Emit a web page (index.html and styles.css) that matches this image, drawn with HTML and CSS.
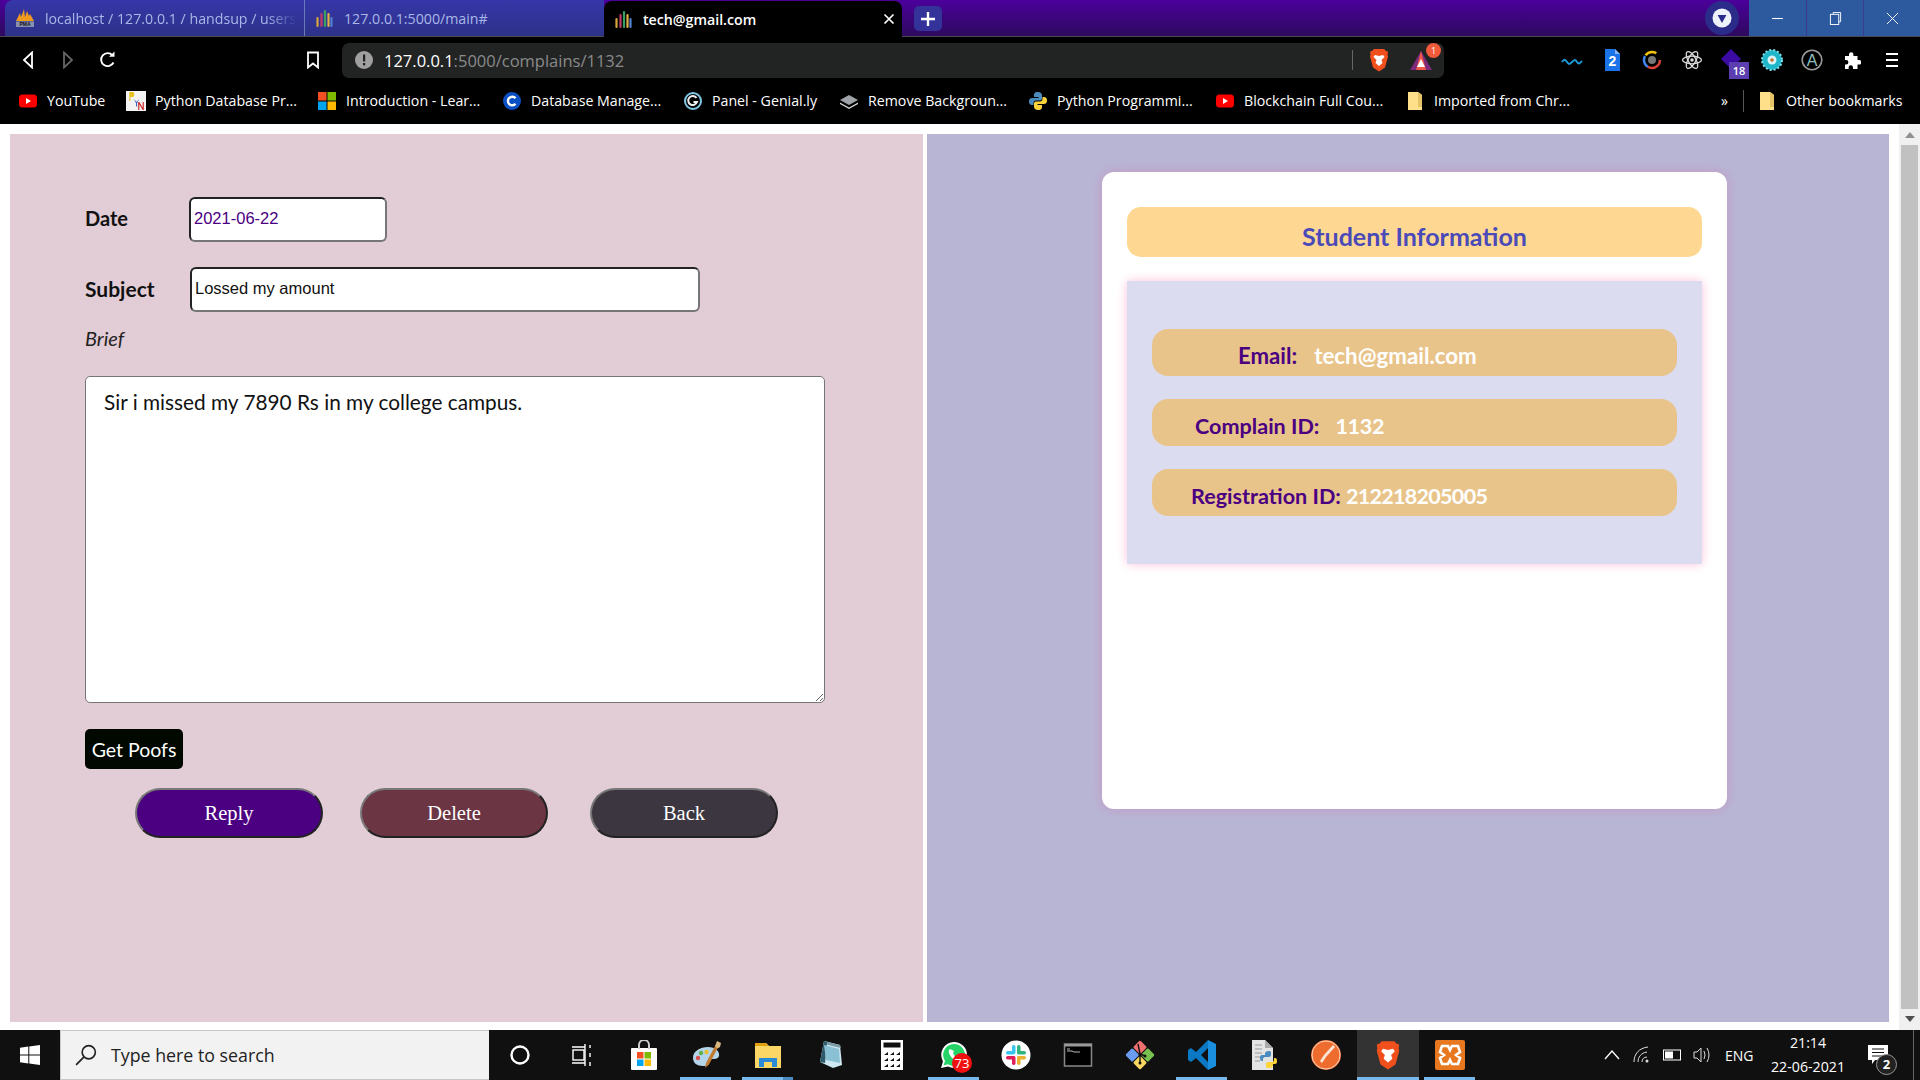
FILE: index.html
```html
<!DOCTYPE html>
<html lang="en">
<head>
<meta charset="utf-8">
<title>tech@gmail.com</title>
<link rel="stylesheet" href="styles.css">
</head>
<body>
<header class="tabstrip">
  <div class="tab tab-first">
    <svg class="tab-ico" viewBox="0 0 20 20"><path d="M1 13L5 5l1 4 3-8 1 8 2-6 2 5 1-2 4 7z" fill="#f09a1e"/><rect x="1" y="13.500" width="18" height="5.500" fill="#8a90b0"/><text x="10" y="18.300" class="pma">PMA</text></svg>
    <span class="tab-text tab-fade">localhost / 127.0.0.1 / handsup / users</span>
  </div>
  <div class="tab tab-second">
    <svg class="tab-ico" viewBox="0 0 20 20"><g fill="none" stroke-width="2.200" stroke-linecap="round"><path d="M3.500 18V10" stroke="#d8a53c"/><path d="M7.500 18V6" stroke="#c23a6a"/><path d="M11 18V3" stroke="#38a060"/><path d="M14.500 18V6" stroke="#e0b040"/><path d="M17.500 18V10" stroke="#5080d0"/></g></svg>
    <span class="tab-text">127.0.0.1:5000/main#</span>
  </div>
  <div class="tab tab-active">
    <svg class="tab-ico" viewBox="0 0 20 20"><g fill="none" stroke-width="2.200" stroke-linecap="round"><path d="M3.500 18V10" stroke="#d8a53c"/><path d="M7.500 18V6" stroke="#c23a6a"/><path d="M11 18V3" stroke="#38a060"/><path d="M14.500 18V6" stroke="#e0b040"/><path d="M17.500 18V10" stroke="#5080d0"/></g></svg>
    <span class="tab-text tab-text-active">tech@gmail.com</span>
    <svg class="tab-close" viewBox="0 0 12 12"><path d="M1.500 1.500l9 9M10.500 1.500l-9 9" stroke="#fff" stroke-width="1.700"/></svg>
  </div>
  <div class="tab-new"><svg viewBox="0 0 16 16"><path d="M8 1v14M1 8h14" stroke="#fff" stroke-width="2.400"/></svg></div>
  <div class="strip-fill"></div>
  <div class="profile"><svg viewBox="0 0 34 34"><circle cx="17" cy="17" r="17" fill="#2b2b8a"/><circle cx="17" cy="17" r="9.500" fill="#eef2fb"/><path d="M12.600 14h8.800L17 22z" fill="#2b2b8a"/></svg></div>
  <div class="winctl"><svg viewBox="0 0 12 12"><path d="M1 6h10" stroke="#fff" stroke-width="1"/></svg></div>
  <div class="winctl winctl-sep"><svg viewBox="0 0 14 14"><path d="M4.500 2.500V.5h8v10h-2" fill="none" stroke="#fff"/><rect x="1.500" y="2.500" width="9" height="11" fill="none" stroke="#fff"/></svg></div>
  <div class="winctl winctl-sep"><svg viewBox="0 0 14 14"><path d="M1 1l12 12M13 1L1 13" stroke="#fff" stroke-width="1"/></svg></div>
</header>

<nav class="toolbar">
  <div class="tool-slot"><svg class="ico18" viewBox="0 0 18 18"><path d="M13 1.500v15L5 9z" fill="none" stroke="#fff" stroke-width="1.800"/></svg></div>
  <div class="tool-slot"><svg class="ico18" viewBox="0 0 18 18"><path d="M5 1.500v15L13 9z" fill="none" stroke="#666" stroke-width="1.800"/></svg></div>
  <div class="tool-slot"><svg class="ico18" viewBox="0 0 18 18"><path d="M14.500 11.500A6.500 6.500 0 1 1 13.500 4.300" fill="none" stroke="#fff" stroke-width="1.900"/><path d="M10 5.800h5.500V.5z" fill="#fff"/></svg></div>
  <div class="tool-slot tool-bookmark"><svg class="ico18" viewBox="0 0 18 18"><path d="M4 1.500h10v15l-5-4-5 4z" fill="none" stroke="#fff" stroke-width="1.800"/></svg></div>
  <div class="urlbar">
    <svg class="url-info" viewBox="0 0 18 18"><circle cx="9" cy="9" r="9" fill="#a0a0a0"/><rect x="8" y="3.500" width="2.200" height="7" fill="#222"/><rect x="8" y="12" width="2.200" height="2.400" fill="#222"/></svg>
    <span class="url-text"><span class="url-host">127.0.0.1</span>:5000/complains/1132</span>
    <div class="url-fill"></div>
    <span class="url-div"></span>
    <svg class="url-brave" viewBox="0 0 20 24"><path d="M5 1h10l2 2 2 .5-.5 3 .5 2-3 11-6 4-6-4L1 8.500 1.500 6.500 1 3.500 3 3z" fill="#f1501d"/><path d="M6 7l4 1 4-1 1.500 2-3 3 1 3-3.500 3-3.500-3 1-3-3-3z" fill="#fff"/></svg>
    <span class="url-bat"><svg viewBox="0 0 24 22"><path d="M12 2L23 21H1z" fill="#7d2a7c"/><path d="M12 2L17 21H7z" fill="#f0584a"/><path d="M12 10l4 8H8z" fill="#fff"/></svg><span class="bat-badge">1</span></span>
  </div>
  <div class="tool-slot ext-first"><svg class="ico22" viewBox="0 0 22 22"><path d="M1 13c2-3 3-3 5 0s3 2 5 0 3-3 5 0 3 1 5-1" fill="none" stroke="#1a9bd8" stroke-width="2"/></svg></div>
  <div class="tool-slot"><svg class="ico22" viewBox="0 0 22 22"><path d="M4 0h10l5 5v17H4z" fill="#1a73e8"/><path d="M14 0l5 5h-5z" fill="#8ab4f8"/><text x="11.500" y="17" class="ext-num">2</text></svg></div>
  <div class="tool-slot"><svg class="ico22" viewBox="0 0 22 22"><circle cx="11" cy="11" r="8" fill="none" stroke="#db4437" stroke-width="2.500" stroke-dasharray="17 34"/><circle cx="11" cy="11" r="8" fill="none" stroke="#4285f4" stroke-width="2.500" stroke-dasharray="12 38" stroke-dashoffset="-17"/><circle cx="11" cy="11" r="8" fill="none" stroke="#f4c20d" stroke-width="2.500" stroke-dasharray="12 38" stroke-dashoffset="-30"/><circle cx="11" cy="11" r="4" fill="#777"/></svg></div>
  <div class="tool-slot"><svg class="ico22" viewBox="0 0 22 22"><g fill="none" stroke="#ddd" stroke-width="1.300"><ellipse cx="11" cy="11" rx="9.500" ry="3.800"/><ellipse cx="11" cy="11" rx="9.500" ry="3.800" transform="rotate(60 11 11)"/><ellipse cx="11" cy="11" rx="9.500" ry="3.800" transform="rotate(120 11 11)"/></g><circle cx="11" cy="11" r="1.800" fill="#ddd"/></svg></div>
  <div class="tool-slot"><svg class="ico22" viewBox="0 0 22 22"><path d="M10 0l10 10-10 10L0 10z" fill="#3a0ca3"/></svg><span class="ext-badge">18</span></div>
  <div class="tool-slot"><svg class="ico22" viewBox="0 0 22 22"><circle cx="11" cy="11" r="10" fill="#1fb6c9" stroke="#7ee0ea" stroke-dasharray="2 2" stroke-width="2"/><circle cx="11" cy="11" r="4.500" fill="#d9f4f7"/><circle cx="11" cy="11" r="1.800" fill="#c96a2a"/></svg></div>
  <div class="tool-slot"><svg class="ico22" viewBox="0 0 22 22"><circle cx="11" cy="11" r="9.800" fill="none" stroke="#999" stroke-width="1.600"/><text x="11" y="16.500" class="ext-a">A</text></svg></div>
  <div class="tool-slot"><svg class="ico18" viewBox="0 0 18 18"><path d="M2 5h4V3.500a2.200 2.200 0 0 1 4.400 0V5h4.100v4H16a2.300 2.300 0 0 1 0 4.600h-1.500V18H10v-1.500a2.200 2.200 0 0 0-4.400 0V18H2v-4.500h1.200a2.200 2.200 0 0 0 0-4.400H2z" fill="#fff"/></svg></div>
  <div class="tool-slot"><svg class="ico18" viewBox="0 0 18 18"><path d="M3 3h12M3 9h12M3 15h12" stroke="#fff" stroke-width="2"/></svg></div>
</nav>

<nav class="bookmarks">
  <div class="bm"><svg class="bm-ico" viewBox="0 0 18 18"><rect y="2.500" width="18" height="13" rx="3.500" fill="#f00"/><path d="M7 6l5 3-5 3z" fill="#fff"/></svg><span>YouTube</span></div>
  <div class="bm"><svg class="bm-ico bm-ico-wide" viewBox="0 0 18 18"><rect width="18" height="18" fill="#f4f4f4"/><path d="M3 1h3.500q2 2 0 4.500H4V9H3z" fill="#e8c020"/><path d="M7 7l2.500 3L12 7 10 11v3H9v-3z" fill="#4060c0"/><path d="M11 10h1l3 5v-5h1v7h-1l-3-5v5h-1z" fill="#d02020"/></svg><span>Python Database Pr...</span></div>
  <div class="bm"><svg class="bm-ico" viewBox="0 0 18 18"><rect width="8.500" height="8.500" fill="#f25022"/><rect x="9.500" width="8.500" height="8.500" fill="#7fba00"/><rect y="9.500" width="8.500" height="8.500" fill="#00a4ef"/><rect x="9.500" y="9.500" width="8.500" height="8.500" fill="#ffb900"/></svg><span>Introduction - Lear...</span></div>
  <div class="bm"><svg class="bm-ico" viewBox="0 0 18 18"><circle cx="9" cy="9" r="9" fill="#0a4fc4"/><path d="M12.500 6.200A4.300 4.300 0 1 0 12.500 11.800" fill="none" stroke="#fff" stroke-width="2.400"/></svg><span>Database Manage...</span></div>
  <div class="bm"><svg class="bm-ico" viewBox="0 0 18 18"><circle cx="9" cy="9" r="8" fill="none" stroke="#7ec8e3" stroke-width="2"/><path d="M12.500 6A4.500 4.500 0 1 0 13 10H9.500" fill="none" stroke="#eee" stroke-width="2"/></svg><span>Panel - Genial.ly</span></div>
  <div class="bm"><svg class="bm-ico" viewBox="0 0 18 18"><path d="M9 3l9 5-9 5-9-5z" fill="#a0a4a8"/><path d="M0 10.500l9 5 9-5v1.500l-9 5-9-5z" fill="#d4d6d8"/></svg><span>Remove Backgroun...</span></div>
  <div class="bm"><svg class="bm-ico" viewBox="0 0 18 18"><path d="M9 0C5 0 5 2 5 3.500V5h4.500v1H3C1 6 0 7.500 0 9.500S1 13 3 13h1.500v-2C4.500 9.500 5.500 8.500 7 8.500h4c1.200 0 2-1 2-2v-3C13 1.500 11.500 0 9 0z" fill="#4b8bbe"/><path d="M9 18c4 0 4-2 4-3.500V13H8.500v-1H15c2 0 3-1.500 3-3.500S17 5 15 5h-1.500v2c0 1.500-1 2.500-2.500 2.500H7c-1.200 0-2 1-2 2v3C5 16.500 6.500 18 9 18z" fill="#ffd43b"/></svg><span>Python Programmi...</span></div>
  <div class="bm"><svg class="bm-ico" viewBox="0 0 18 18"><rect y="2.500" width="18" height="13" rx="3.500" fill="#f00"/><path d="M7 6l5 3-5 3z" fill="#fff"/></svg><span>Blockchain Full Cou...</span></div>
  <div class="bm"><svg class="bm-ico" viewBox="0 0 18 18"><path d="M2 0h10l4 3v15H2z" fill="#ffe08a"/><path d="M12 0l4 3v12h-4z" fill="#e8c468"/></svg><span>Imported from Chr...</span></div>
  <div class="bm-more">»</div>
  <div class="bm-div"></div>
  <div class="bm"><svg class="bm-ico" viewBox="0 0 18 18"><path d="M2 0h10l4 3v15H2z" fill="#ffe08a"/><path d="M12 0l4 3v12h-4z" fill="#e8c468"/></svg><span>Other bookmarks</span></div>
</nav>

<main class="page">
  <section class="panel-left">
    <div class="field field-date">
      <label class="field-label">Date</label>
      <input class="input input-date" type="text" value="2021-06-22" readonly>
    </div>
    <div class="field field-subject">
      <label class="field-label">Subject</label>
      <input class="input input-subject" type="text" value="Lossed my amount" readonly>
    </div>
    <p class="brief">Brief</p>
    <textarea class="brief-box" readonly>Sir i missed my 7890 Rs in my college campus.</textarea>
    <button class="proofs" type="button">Get Poofs</button>
    <div class="actions">
      <button class="pill pill-reply" type="button">Reply</button>
      <button class="pill pill-delete" type="button">Delete</button>
      <button class="pill pill-back" type="button">Back</button>
    </div>
  </section>
  <section class="panel-right">
    <div class="card">
      <h2 class="card-title">Student Information</h2>
      <div class="info">
        <div class="info-row row-email"><b class="info-key key-email">Email:</b><span class="info-val">tech@gmail.com</span></div>
        <div class="info-row row-complain"><b class="info-key key-complain">Complain ID:</b><span class="info-val val-num">1132</span></div>
        <div class="info-row row-reg"><b class="info-key key-reg">Registration ID:</b><span class="info-val val-num val-long">212218205005</span></div>
      </div>
    </div>
  </section>
  <div class="scrollbar">
    <svg class="sb-arrow" viewBox="0 0 10 6"><path d="M5 0l5 6H0z" fill="#909090"/></svg>
    <div class="sb-thumb"></div>
    <svg class="sb-arrow" viewBox="0 0 10 6"><path d="M5 6L0 0h10z" fill="#505050"/></svg>
  </div>
</main>

<footer class="taskbar">
  <div class="start"><svg viewBox="0 0 20 20"><path d="M0 2.800l8.300-1.200v8H0zM9.300 1.400L20 0v9.600H9.300zM0 10.600h8.300v8L0 17.300zM9.300 10.600H20V20L9.300 18.600z" fill="#fff"/></svg></div>
  <div class="search">
    <svg class="search-ico" viewBox="0 0 20 20"><circle cx="12.500" cy="7.500" r="6" fill="none" stroke="#222" stroke-width="1.500"/><path d="M8 12L1 19" stroke="#222" stroke-width="1.600"/></svg>
    <span>Type here to search</span>
  </div>
  <div class="slot"><svg class="tb-ico" viewBox="0 0 30 30"><circle cx="15" cy="15" r="8.500" fill="none" stroke="#fff" stroke-width="2.400"/></svg></div>
  <div class="slot"><svg class="tb-ico" viewBox="0 0 30 30"><g fill="none" stroke="#fff" stroke-width="1.400"><path d="M5 7h13M5 23h13M18 4v22"/><rect x="6" y="10" width="11" height="10"/><path d="M23 5v3M23 13v4M23 22v4"/></g></svg></div>
  <div class="slot"><svg class="tb-ico" viewBox="0 0 30 30"><rect x="2" y="8" width="26" height="22" rx="1" fill="#fff"/><path d="M10 9V5a5 5 0 0 1 10 0v4" fill="none" stroke="#ccc" stroke-width="2"/><rect x="8" y="12" width="6.500" height="6.500" fill="#f25022"/><rect x="15.500" y="12" width="6.500" height="6.500" fill="#7fba00"/><rect x="8" y="19.500" width="6.500" height="6.500" fill="#00a4ef"/><rect x="15.500" y="19.500" width="6.500" height="6.500" fill="#ffb900"/></svg></div>
  <div class="slot slot-on"><svg class="tb-ico" viewBox="0 0 30 30"><path d="M2 18C2 11 9 7 17 7c7 0 12 4 11 9-1 3-4 3-7 3-2 0-3 1-3 3 0 3-2 4-6 4-6 0-10-3-10-8z" fill="#b4d4ea"/><circle cx="7" cy="18" r="2.200" fill="#d85050"/><circle cx="10" cy="13" r="2.200" fill="#60b050"/><circle cx="15.500" cy="12" r="2.200" fill="#e8c030"/><path d="M14 28l1-5 9-17 3 1.500-9 17z" fill="#c07a30"/><path d="M24 6l2-5 4 2-1 4-2.500 1.500z" fill="#d8b880"/></svg></div>
  <div class="slot slot-on slot-split"><svg class="tb-ico" viewBox="0 0 30 30"><path d="M2 3h11l3 3h12v22H2z" fill="#fcd766"/><path d="M2 3h11l3 3H2z" fill="#e0a010"/><path d="M6 27v-9h18v9h-5v-5h-8v5z" fill="#2a8ad4"/></svg></div>
  <div class="slot"><svg class="tb-ico" viewBox="0 0 30 30"><path d="M9 1l16 4 2 20-9 3-13-6z" fill="#cfe8f2"/><path d="M9 1l16 4 1 3L9 4z" fill="#7a9aa8"/><path d="M5 22l4-21 3 1-2 21z" fill="#2f5a6a"/><path d="M9 5l15 4 1 14-14-3z" fill="#8ac0d4"/></svg></div>
  <div class="slot"><svg class="tb-ico" viewBox="0 0 30 30"><rect x="4" width="22" height="30" fill="#fff"/><rect x="6.500" y="2.500" width="17" height="5" fill="#111"/><g fill="#111"><path d="M7 15l4-3v3zM13 15l4-3v3zM19 15l4-3v3zM7 21l4-3v3zM13 21l4-3v3zM19 21l4-3v3zM7 27l4-3v3zM13 27l4-3v3zM19 27l4-3v3z"/></g></svg></div>
  <div class="slot slot-on"><span class="wa"><svg class="tb-ico" viewBox="0 0 30 30"><path d="M15 2a13 13 0 0 1 0 26 13 13 0 0 1-6-1.500L2 28l2-6.500A13 13 0 0 1 15 2z" fill="#fff"/><path d="M15 4a11 11 0 0 1 0 22 11 11 0 0 1-6-1.700L4.500 25.500 6 21A11 11 0 0 1 15 4z" fill="#25d366"/><path d="M11 9c-3 2 0 7 3 10s7 4 9 1l-3-3-2 1c-2-1-3-3-4-5l1-2z" fill="#fff"/></svg><span class="wa-badge">73</span></span></div>
  <div class="slot"><svg class="tb-ico" viewBox="0 0 30 30"><circle cx="15" cy="15" r="14.500" fill="#fff"/><rect x="11" y="5" width="3.500" height="9" rx="1.700" fill="#36c5f0"/><rect x="5" y="11" width="9" height="3.500" rx="1.700" fill="#36c5f0"/><rect x="16" y="5" width="3.500" height="9" rx="1.700" fill="#2eb67d"/><rect x="16" y="11" width="9" height="3.500" rx="1.700" fill="#2eb67d"/><rect x="16" y="16" width="3.500" height="9" rx="1.700" fill="#ecb22e"/><rect x="16" y="16" width="9" height="3.500" rx="1.700" fill="#ecb22e"/><rect x="11" y="16" width="3.500" height="9" rx="1.700" fill="#e01e5a"/><rect x="5" y="16" width="9" height="3.500" rx="1.700" fill="#e01e5a"/></svg></div>
  <div class="slot"><svg class="tb-ico" viewBox="0 0 30 30"><rect x="1.500" y="4" width="27" height="22" fill="#000" stroke="#888" stroke-width="1.500"/><rect x="1.500" y="4" width="27" height="2.500" fill="#999"/><path d="M4 9h3M4 11h5l2 1h6" stroke="#bbb" stroke-width="1" fill="none"/></svg></div>
  <div class="slot"><svg class="tb-ico" viewBox="0 0 30 30"><g transform="rotate(45 15 15)"><rect x="4.500" y="4.500" width="10" height="10" rx="1.500" fill="#f07070"/><rect x="15.500" y="4.500" width="10" height="10" rx="1.500" fill="#78c050"/><rect x="15.500" y="15.500" width="10" height="10" rx="1.500" fill="#f8d860"/><rect x="4.500" y="15.500" width="10" height="10" rx="1.500" fill="#6a9cf0"/></g><path d="M13 4l2 10 5 2M15 14v9" stroke="#111" stroke-width="1.400" fill="none"/><circle cx="15" cy="23" r="1.500" fill="#111"/><circle cx="20" cy="16" r="1.500" fill="#111"/></svg></div>
  <div class="slot slot-on"><svg class="tb-ico" viewBox="0 0 30 30"><path d="M21 0l8 4v22l-8 4z" fill="#1a8fe0"/><path d="M21 0L9 12 4 8 1 10v10l3 2 5-4 12 12v-8l-7-7 7-7z" fill="#0a78c4"/></svg></div>
  <div class="slot"><svg class="tb-ico" viewBox="0 0 30 30"><path d="M3 0h13l8 8v22H3z" fill="#e4e4e4"/><path d="M16 0l8 8h-8z" fill="#aaa"/><path d="M6 5h7M6 9h7M6 13h7M6 17h5M6 21h5" stroke="#999"/><path d="M20 11c-3 0-4 1-4 3v1h-3c-1.500 0-2 1-2 3s.5 3 2 3h1v-2c0-1 1-2 2-2h4c1 0 2-1 2-2v-2c0-2-1-2-2-2z" fill="#4b8bbe"/><path d="M20 28c3 0 4-1 4-3v-1h2c1.500 0 2-1 2-3s-.5-3-2-3h-1v2c0 1-1 2-2 2h-4c-1 0-2 1-2 2v2c0 2 1 2 3 2z" fill="#ffd43b"/></svg></div>
  <div class="slot"><svg class="tb-ico" viewBox="0 0 30 30"><circle cx="15" cy="15" r="15" fill="#ef6c2f"/><circle cx="15" cy="15" r="14" fill="none" stroke="#f8d4c0" stroke-width="1"/><path d="M22 5l2 2-9 10-4 6-2-2 4-6z" fill="#fbe3d6"/></svg></div>
  <div class="slot slot-on slot-current"><svg class="tb-ico" viewBox="0 0 20 24"><path d="M5 1h10l2 2 2 .5-.5 3 .5 2-3 11-6 4-6-4L1 8.500 1.500 6.500 1 3.500 3 3z" fill="#f1501d"/><path d="M6 7l4 1 4-1 1.500 2-3 3 1 3-3.500 3-3.500-3 1-3-3-3z" fill="#fff"/></svg></div>
  <div class="slot slot-on"><svg class="tb-ico" viewBox="0 0 30 30"><rect width="30" height="30" rx="2" fill="#e8781f"/><path d="M7 6h6l2 4 2-4h6l2 6-4 3 4 3-2 6h-6l-2-4-2 4H7l-2-6 4-3-4-3z" fill="none" stroke="#fff" stroke-width="2.600"/></svg></div>
  <div class="tray">
    <svg class="tray-ico" viewBox="0 0 18 18"><path d="M2 13l7-8 7 8" fill="none" stroke="#fff" stroke-width="1.300"/></svg>
    <svg class="tray-ico" viewBox="0 0 18 18"><g fill="none" stroke="#ddd"><path d="M1 16C1 8 6 2 15 1"/><path d="M5 16c0-5 3-9 9-10"/><path d="M9 16c0-3 2-5 5-5"/></g><circle cx="14" cy="15" r="1.500" fill="#ddd"/></svg>
    <svg class="tray-ico" viewBox="0 0 18 18"><rect x=".5" y="4" width="17" height="10" fill="none" stroke="#fff"/><rect x="2" y="5.500" width="8" height="7" fill="#fff"/></svg>
    <svg class="tray-ico" viewBox="0 0 18 18"><path d="M1 6h3l4-4v14l-4-4H1z" fill="none" stroke="#ddd"/><path d="M11 5q2 4 0 8M14 2q4 7 0 14" fill="none" stroke="#ddd"/></svg>
    <span class="tray-lang">ENG</span>
    <div class="clock"><span>21:14</span><span>22-06-2021</span></div>
    <span class="notif"><svg viewBox="0 0 20 20"><path d="M0 0h20v15H7l-3 4v-4H0z" fill="#fff"/><path d="M4 4h12M4 7.500h12M4 11h12" stroke="#111"/></svg><span class="notif-badge">2</span></span>
    <span class="desk-line"></span>
  </div>
</footer>
</body>
</html>
```

FILE: styles.css
```css
* { box-sizing: border-box; }
html, body { margin: 0; height: 100%; }
body {
  width: 1920px; height: 1080px; overflow: hidden;
  display: flex; flex-direction: column;
  background: #fff;
  font-family: "Open Sans", "Noto Sans", sans-serif;
}
svg { display: block; flex: none; }

/* tab strip */
.tabstrip {
  height: 37px; flex: none; display: flex; align-items: stretch;
  background: linear-gradient(180deg, #4b009b 0%, #2d0a5e 100%);
  border-bottom: 1px solid #4a4a55;
}
.tab { display: flex; align-items: center; height: 36px; color: #a9b8e8; font-size: 14.200px; flex: none; }
.tab-first { width: 300px; margin-left: 5px; padding-left: 10px; background: linear-gradient(180deg, #3636a8, #2d3288); border-radius: 8px 0 0 0; border-right: 1px solid #6a7ab8; }
.tab-second { width: 299px; padding-left: 9px; background: linear-gradient(180deg, #3636a8, #2d3288); }
.tab-active { width: 298px; padding-left: 9px; background: #000; border-radius: 8px 8px 0 0; margin-top: 1px; }
.tab-ico { width: 20px; height: 20px; margin-right: 10px; }
.tab-text { white-space: nowrap; overflow: hidden; width: 252px; }
.tab-fade { -webkit-mask-image: linear-gradient(90deg, #000 88%, transparent 100%); mask-image: linear-gradient(90deg, #000 88%, transparent 100%); }
.tab-text-active { color: #fff; font-weight: 600; width: 235px; }
.tab-close { width: 12px; height: 12px; margin-left: 5px; }
.tab-new { width: 28px; height: 25px; margin: 6px 0 0 12px; background: #333399; border-radius: 5px; display: flex; align-items: center; justify-content: center; }
.tab-new svg { width: 16px; height: 16px; }
.strip-fill { flex: 1; }
.profile { width: 34px; height: 34px; margin: 1px 10px 0 0; }
.winctl { width: 57px; height: 36px; background: #2d5a9f; display: flex; align-items: center; justify-content: center; }
.winctl svg { width: 13px; height: 13px; }
.winctl-sep { border-left: 1px solid #3a3a90; }
.pma { font: 700 5px "Liberation Sans", sans-serif; fill: #111; text-anchor: middle; }

/* toolbar */
.toolbar { height: 46px; flex: none; background: #000; display: flex; align-items: center; padding-left: 8px; }
.tool-slot { width: 40px; height: 34px; display: flex; align-items: center; justify-content: center; flex: none; position: relative; }
.tool-bookmark { margin-left: 165px; }
.ico18 { width: 18px; height: 18px; }
.ico22 { width: 22px; height: 22px; }
.urlbar { width: 1102px; height: 35px; margin-left: 9px; background: #222424; border-radius: 7px; display: flex; align-items: center; padding-left: 13px; }
.url-info { width: 18px; height: 18px; }
.url-text { margin-left: 11px; color: #8a8a8a; font-size: 16.500px; white-space: nowrap; }
.url-host { color: #fff; }
.url-fill { flex: 1; }
.url-div { width: 1px; height: 20px; background: #666; margin-right: 16px; }
.url-brave { width: 20px; height: 24px; margin-right: 20px; }
.url-bat { width: 24px; height: 22px; position: relative; margin-right: 11px; }
.url-bat svg { width: 24px; height: 22px; }
.bat-badge { position: absolute; top: -6px; right: -8px; width: 15px; height: 15px; border-radius: 50%; background: #f05a3a; color: #fff; font-size: 9px; line-height: 15px; text-align: center; }
.ext-first { margin-left: 108px; }
.ext-num { font: 700 14px "Liberation Sans", sans-serif; fill: #fff; text-anchor: middle; }
.ext-a { font: 400 16px "Liberation Sans", sans-serif; fill: #8fc0c0; text-anchor: middle; }
.ext-badge { position: absolute; left: 17px; bottom: -2px; width: 20px; height: 17px; background: #5b3fb0; color: #fff; font-size: 11px; line-height: 17px; text-align: center; font-weight: 600; }

/* bookmarks */
.bookmarks {
  height: 41px; flex: none; background: #000; color: #fff; font-size: 14.200px; padding: 0 0 6px 19px;
  display: grid; align-items: center;
  grid-template-columns: 108px 191px 185px 181px 156px 189px 187px 190px 315px 22px 15px 1fr;
}
.bm { display: flex; align-items: center; white-space: nowrap; }
.bm-ico { width: 18px; height: 18px; margin-right: 10px; }
.bm-ico-wide { width: 20px; height: 20px; margin: 0 9px 0 -1px; }
.bm-more { font-size: 14px; }
.bm-div { width: 1px; height: 22px; background: #555; }

/* page */
.page { flex: 1; display: flex; padding: 10px 0 8px 10px; min-height: 0; }
.panel-left { width: 913px; background: #e2ccd6; padding: 63px 0 0 75px; flex: none; }
.field { display: flex; align-items: center; height: 45px; }
.field-label { font: 700 20px Lato, sans-serif; color: #111; padding-bottom: 3px; }
.field-date .field-label { width: 104px; }
.field-subject { margin-top: 25px; }
.field-subject .field-label { width: 105px; font-size: 21px; }
.input { height: 45px; border: 2px solid; border-color: #222 #767676 #767676 #222; border-radius: 6px; background: #fff; padding: 0 3px 2px; font: 16.500px "Liberation Sans", sans-serif; outline: none; }
.input-date { width: 198px; color: #4b0082; }
.input-subject { width: 510px; color: #111; }
.brief { margin: 14px 0 0; height: 24px; font: italic 400 20px/24px Lato, sans-serif; color: #222; }
.brief-box { display: block; width: 740px; height: 327px; margin-top: 26px; border: 1px solid #767676; border-radius: 5px; padding: 12px 18px; background: #fff; font: 400 20.800px/26px Lato, sans-serif; color: #111; outline: none; }
.proofs { display: block; width: 98px; height: 40px; margin-top: 26px; padding: 0; border: 0; border-radius: 5px; background: #000800; color: #fff; font: 400 19.500px Lato, sans-serif; }
.actions { display: flex; margin: 19px 0 0 50px; gap: 37px; }
.pill { width: 188px; height: 50px; padding: 0; border: 2px solid; border-color: #777 #222 #222 #777; border-radius: 25px; color: #fff; font: 400 20.500px "Liberation Serif", serif; }
.pill-reply { background: #4b0082; }
.pill-delete { background: #6b3544; }
.pill-back { background: #3b3640; margin-left: 5px; }

.panel-right { width: 962px; margin-left: 4px; background: #b8b5d4; padding: 38px 0 0 175px; flex: none; }
.card { width: 625px; height: 637px; background: #fff; border-radius: 12px; box-shadow: 0 0 12px #c49ac4; padding: 35px 25px 0; }
.card-title { margin: 0; height: 50px; background: #fed893; border-radius: 14px; text-align: center; font: 700 25px/58px Lato, sans-serif; color: #4a4ab8; }
.info { height: 283px; margin-top: 24px; background: #dcdcf0; box-shadow: 0 0 10px #ffc0dc; padding: 48px 25px 0; display: flex; flex-direction: column; gap: 23px; }
.info-row { height: 47px; background: #e9c48a; border-radius: 16px; line-height: 54px; white-space: nowrap; display: flex; font-family: Lato, sans-serif; }
.info-key { font-size: 21.600px; font-weight: 700; color: #4b0082; }
.info-val { font-size: 22.300px; font-weight: 700; color: #fff; }
.val-num { font-size: 21.500px; letter-spacing: -.3px; }
.val-long { letter-spacing: -.7px; }
.row-email { padding-left: 86px; }
.key-email { margin-right: 17px; font-size: 22.200px; }
.row-complain { padding-left: 43px; }
.key-complain { margin-right: 16px; }
.row-reg { padding-left: 39px; }
.key-reg { margin-right: 5px; }

.scrollbar { width: 21px; margin: -10px 0 -8px 10px; display: flex; flex-direction: column; align-items: center; background: #f0f0f0; padding: 8px 0; flex: none; }
.sb-arrow { width: 10px; height: 6px; }
.sb-thumb { width: 17px; flex: 1; background: #c1c1c1; margin: 7px 0; }

/* taskbar */
.taskbar { height: 50px; flex: none; background: #101010; display: flex; align-items: stretch; }
.start { width: 60px; display: flex; align-items: center; padding-left: 20px; flex: none; }
.start svg { width: 20px; height: 20px; }
.search { width: 429px; flex: none; background: #f2f2f2; border: solid #c8c8c8; border-width: 1px 0 1px 1px; display: flex; align-items: center; padding-left: 14px; font-size: 17.800px; color: #222; }
.search-ico { width: 22px; height: 22px; margin-right: 14px; }
.slot { width: 62px; flex: none; display: flex; align-items: center; justify-content: center; position: relative; }
.slot-on::after { content: ""; position: absolute; left: 5px; right: 6px; bottom: 0; height: 3px; background: #76b9ed; }
.slot-split::before { content: ""; position: absolute; right: 6px; width: 10px; bottom: 0; height: 3px; background: #4a8ac0; z-index: 1; }
.slot-current { background: #333; }
.slot-current::after { left: 0; right: 0; }
.tb-ico { width: 30px; height: 30px; }
.wa { position: relative; display: block; }
.wa-badge { position: absolute; right: -3px; bottom: -3px; width: 20px; height: 20px; border-radius: 50%; background: #f01010; color: #fff; font-size: 13px; line-height: 20px; text-align: center; }
.tray { flex: 1; display: flex; align-items: center; padding-left: 122px; color: #fff; }
.tray-ico { width: 18px; height: 18px; margin-right: 12px; }
.tray-lang { font-size: 14px; margin-left: 2px; width: 33px; }
.clock { width: 100px; display: flex; flex-direction: column; align-items: center; font-size: 14.200px; line-height: 24px; }
.notif { position: relative; margin-left: 10px; display: block; width: 20px; height: 20px; }
.notif svg { width: 20px; height: 20px; }
.notif-badge { position: absolute; right: -9px; bottom: -10px; width: 21px; height: 21px; border-radius: 50%; background: #222; border: 1px solid #999; font-size: 13px; line-height: 19px; text-align: center; font-weight: 700; }
.desk-line { width: 1px; height: 50px; margin-left: 25px; background: #666; flex: none; }
```
